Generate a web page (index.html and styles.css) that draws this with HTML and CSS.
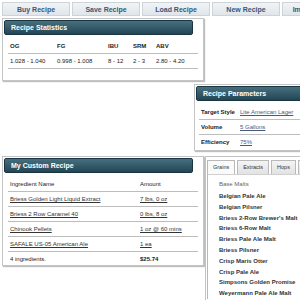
FILE: index.html
```html
<!DOCTYPE html>
<html lang="en">
<head>
    <meta charset="UTF-8">
    <title>Recipe Builder</title>
    <link rel="stylesheet" href="styles.css">
</head>
<body>

    <!-- Top toolbar -->
    <div class="toolbar">
        <button class="tool-btn">Buy Recipe</button>
        <button class="tool-btn">Save Recipe</button>
        <button class="tool-btn">Load Recipe</button>
        <button class="tool-btn">New Recipe</button>
        <button class="tool-btn">Import Recipe</button>
    </div>

    <!-- Recipe statistics -->
    <div class="panel stats-panel">
        <div class="panel-header">Recipe Statistics</div>
        <div class="stats-grid">
            <div class="cell label">OG</div>
            <div class="cell label">FG</div>
            <div class="cell label">IBU</div>
            <div class="cell label">SRM</div>
            <div class="cell label">ABV</div>
            <div class="cell">1.028 - 1.040</div>
            <div class="cell">0.998 - 1.008</div>
            <div class="cell">8 - 12</div>
            <div class="cell">2 - 3</div>
            <div class="cell">2.80 - 4.20</div>
        </div>
    </div>

    <!-- Recipe parameters -->
    <div class="panel params-panel">
        <div class="panel-header">Recipe Parameters</div>
        <div class="params-grid">
            <div class="cell label">Target Style</div>
            <div class="cell"><a href="#">Lite American Lager</a></div>
            <div class="cell label">Volume</div>
            <div class="cell"><a href="#">5 Gallons</a></div>
            <div class="cell label last">Efficiency</div>
            <div class="cell last"><a href="#">75%</a></div>
        </div>
    </div>

    <div class="bottom-row">

        <!-- Ingredient list -->
        <div class="panel recipe-panel">
            <div class="panel-header">My Custom Recipe</div>
            <div class="recipe-grid">
                <div class="cell">Ingredient Name</div>
                <div class="cell">Amount</div>
                <div class="cell"><a href="#">Briess Golden Light Liquid Extract</a></div>
                <div class="cell"><a href="#">7 lbs, 0 oz</a></div>
                <div class="cell"><a href="#">Briess 2 Row Caramel 40</a></div>
                <div class="cell"><a href="#">0 lbs, 8 oz</a></div>
                <div class="cell"><a href="#">Chinook Pellets</a></div>
                <div class="cell"><a href="#">1 oz @ 60 mins</a></div>
                <div class="cell"><a href="#">SAFALE US-05 American Ale</a></div>
                <div class="cell"><a href="#">1 ea</a></div>
                <div class="cell last">4 ingredients.</div>
                <div class="cell last total">$25.74</div>
            </div>
        </div>

        <!-- Ingredient picker -->
        <div class="panel picker-panel">
            <div class="tabs">
                <div class="tab active">Grains</div>
                <div class="tab">Extracts</div>
                <div class="tab">Hops</div>
                <div class="tab">Yeast</div>
            </div>
            <div class="tab-body">
                <div class="group-title">Base Malts</div>
                <div class="grain">Belgian Pale Ale</div>
                <div class="grain">Belgian Pilsner</div>
                <div class="grain">Briess 2-Row Brewer's Malt</div>
                <div class="grain">Briess 6-Row Malt</div>
                <div class="grain">Briess Pale Ale Malt</div>
                <div class="grain">Briess Pilsner</div>
                <div class="grain">Crisp Maris Otter</div>
                <div class="grain">Crisp Pale Ale</div>
                <div class="grain">Simpsons Golden Promise</div>
                <div class="grain">Weyermann Pale Ale Malt</div>
            </div>
        </div>

    </div>

</body>
</html>
```

FILE: styles.css
```css
body {
    font-family: "Liberation Sans", Arial, sans-serif;
    font-size: 6px;
    color: #222;
    background-color: #ffffff;
    margin: 0;
    padding: 2px;
    width: 400px;
    height: 296px;
    overflow: hidden;
}

a {
    color: #333;
}

/* Toolbar buttons */
.toolbar {
    display: flex;
    gap: 2px;
}

.tool-btn {
    flex: none;
    width: 68px;
    height: 14px;
    margin: 0;
    padding: 0;
    border: 1px solid #cdd4d9;
    background: linear-gradient(#f1f4f6, #dfe5ea);
    color: #3a5777;
    font-family: "Liberation Sans", Arial, sans-serif;
    font-size: 7px;
    font-weight: bold;
}

/* Panels */
.panel {
    background-color: #ffffff;
    border: 1px solid #c4c4c4;
    box-shadow: 1px 1px 1px rgba(0, 0, 0, 0.25);
    box-sizing: border-box;
}

.panel-header {
    height: 13px;
    line-height: 13px;
    margin: 1px 10px 0 1px;
    padding-left: 6px;
    border: 1px solid #1a3442;
    border-radius: 2px;
    background: linear-gradient(#46707f, #234655);
    color: #ffffff;
    font-size: 7px;
    font-weight: bold;
}

.cell {
    height: 14px;
    line-height: 14px;
    padding-left: 2px;
    border-bottom: 1px solid #bdbdbd;
    white-space: nowrap;
}

.cell.last {
    border-bottom: none;
}

.label {
    font-weight: bold;
}

/* Recipe statistics */
.stats-panel {
    width: 202px;
    height: 63px;
    margin-top: 2px;
}

.stats-grid {
    display: grid;
    grid-template-columns: 47px 51px 25px 23px 1fr;
    margin: 4px 5px 0 5px;
}

.stats-grid .cell {
    height: 14px;
    line-height: 14px;
}

/* Recipe parameters */
.params-panel {
    width: 120px;
    height: 67px;
    margin: 3px 0 0 192px;
}

.params-panel .panel-header {
    margin-right: 0;
}

.params-grid {
    display: grid;
    grid-template-columns: 39px 1fr;
    margin: 4px 0 0 4px;
}

.params-grid a {
    color: #4a5a7a;
}

/* Bottom row */
.bottom-row {
    display: flex;
    gap: 1px;
    margin-top: 5px;
    align-items: flex-start;
}

.recipe-panel {
    width: 202px;
    height: 110px;
    flex: none;
}

.recipe-grid {
    display: grid;
    grid-template-columns: 130px 1fr;
    margin: 4px 5px 0 5px;
}

.total {
    font-weight: bold;
}

/* Ingredient picker */
.picker-panel {
    flex: none;
    width: 110px;
    height: 160px;
    padding: 2px 0 0 1px;
}

.tabs {
    display: flex;
    gap: 2px;
    height: 14px;
    margin-top: 1px;
}

.tab {
    padding: 0 5px;
    line-height: 13px;
    border: 1px solid #b9b9b9;
    border-bottom: none;
    background: linear-gradient(#f4f4f4, #e2e2e2);
    color: #333;
    font-size: 5.5px;
}

.tab.active {
    background: #fafafa;
}

.tab-body {
    border-left: 1px solid #b9b9b9;
    border-top: 1px solid #d0d0d0;
    padding: 4px 0 0 11px;
}

.group-title {
    color: #666;
    line-height: 10px;
    margin-bottom: 2px;
}

.grain {
    font-weight: bold;
    color: #333;
    line-height: 10.8px;
    white-space: nowrap;
}
```
